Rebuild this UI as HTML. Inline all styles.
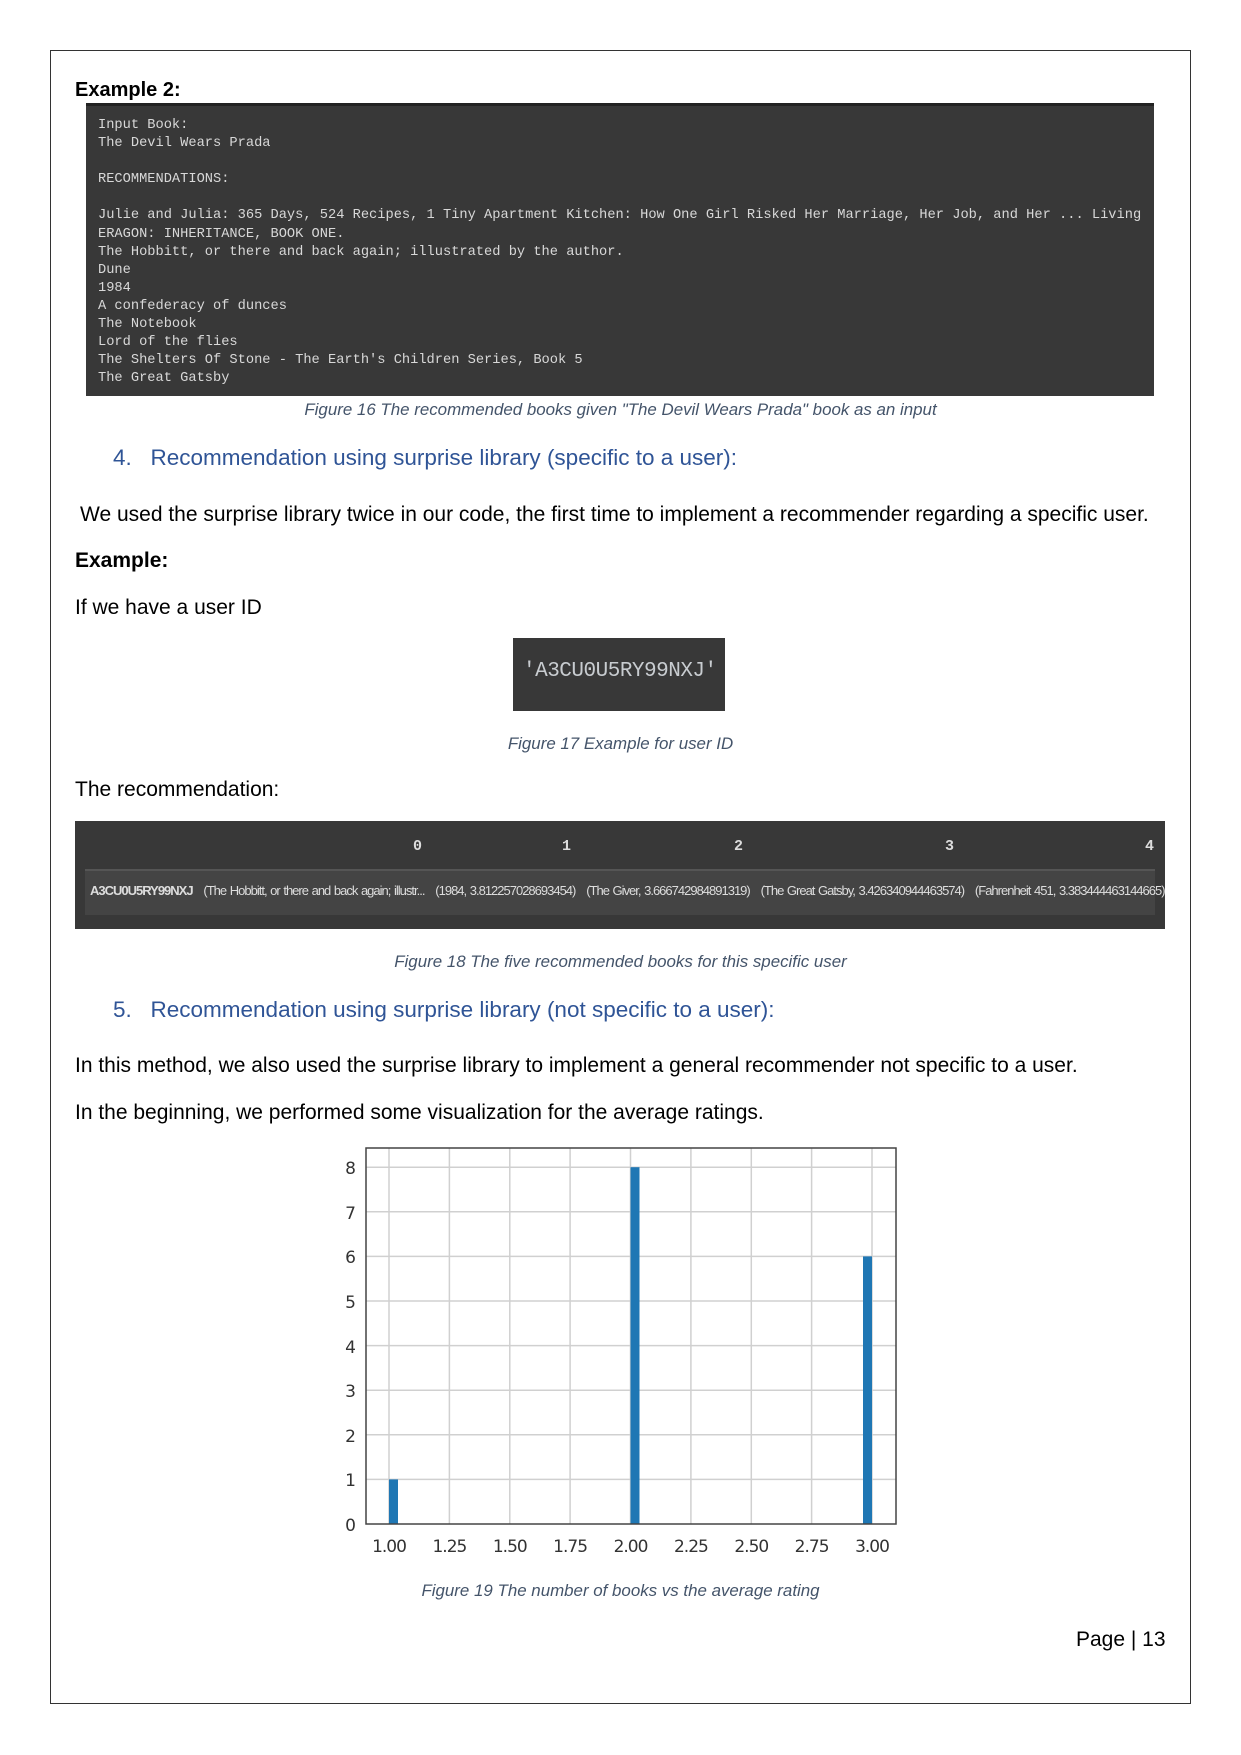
<!DOCTYPE html>
<html><head><meta charset="utf-8"><style>
body{margin:0;width:1241px;height:1755px;background:#fff;position:relative;font-family:"Liberation Sans",sans-serif;color:#000;overflow:hidden}
.a{position:absolute;white-space:nowrap}
.frame{position:absolute;left:50px;top:50px;width:1139px;height:1652px;border:1.5px solid #333}
.code{position:absolute;left:86px;top:103px;width:1068px;height:293px;background:#383838;border-top:3px solid #222;box-sizing:border-box}
.code pre{margin:0;position:absolute;left:12px;top:11px;font-family:"Liberation Mono",monospace;font-size:13.7px;line-height:18.1px;color:#d8d8d8}
.cap{font-style:italic;font-size:16.9px;color:#44546A;text-align:center;width:1241px;left:0}
.h{font-size:22.5px;color:#2F5496}
.p{font-size:21px}
</style></head><body>
<div class="frame"></div>
<div class="a" style="left:75px;top:79px;font-size:20px;font-weight:bold">Example 2:</div>
<div class="code"><pre>Input Book:
The Devil Wears Prada

RECOMMENDATIONS:

Julie and Julia: 365 Days, 524 Recipes, 1 Tiny Apartment Kitchen: How One Girl Risked Her Marriage, Her Job, and Her ... Living
ERAGON: INHERITANCE, BOOK ONE.
The Hobbitt, or there and back again; illustrated by the author.
Dune
1984
A confederacy of dunces
The Notebook
Lord of the flies
The Shelters Of Stone - The Earth's Children Series, Book 5
The Great Gatsby</pre></div>
<div class="a cap" style="top:400px">Figure 16 The recommended books given "The Devil Wears Prada" book as an input</div>
<div class="a h" style="left:113px;top:445px">4.&nbsp;&nbsp; Recommendation using surprise library (specific to a user):</div>
<div class="a p" style="left:80px;top:503px">We used the surprise library twice in our code, the first time to implement a recommender regarding a specific user.</div>
<div class="a p" style="left:75px;top:549px;font-weight:bold">Example:</div>
<div class="a p" style="left:75px;top:596px">If we have a user ID</div>
<div class="a" style="left:513px;top:638px;width:212px;height:73px;background:#383838"></div>
<div class="a" style="left:523px;top:660px;font-family:'Liberation Mono',monospace;font-size:21px;color:#c8ccd0;letter-spacing:-0.5px">'A3CU0U5RY99NXJ'</div>
<div class="a cap" style="top:734px">Figure 17 Example for user ID</div>
<div class="a p" style="left:75px;top:778px">The recommendation:</div>
<div class="a" style="left:75px;top:821px;width:1090px;height:108px;background:#383838"></div>
<div class="a" style="left:85px;top:869px;width:1070px;height:44px;background:#444;border-top:2px solid #555"></div>
<div class="a" style="top:838px;left:0;font-family:'Liberation Mono',monospace;font-size:15px;font-weight:bold;color:#ddd">
<span class="a" style="left:413px">0</span><span class="a" style="left:562px">1</span><span class="a" style="left:734px">2</span><span class="a" style="left:945px">3</span><span class="a" style="left:1145px">4</span></div>
<div class="a" style="left:90px;top:883px;font-size:13px;color:#ddd;letter-spacing:-1.0px;word-spacing:1px"><b>A3CU0U5RY99NXJ</b>&nbsp;&nbsp; (The Hobbitt, or there and back again; illustr...&nbsp;&nbsp; (1984, 3.812257028693454)&nbsp;&nbsp; (The Giver, 3.666742984891319)&nbsp;&nbsp; (The Great Gatsby, 3.426340944463574)&nbsp;&nbsp; (Fahrenheit 451, 3.383444463144665)</div>
<div class="a cap" style="top:952px">Figure 18 The five recommended books for this specific user</div>
<div class="a h" style="left:113px;top:997px">5.&nbsp;&nbsp; Recommendation using surprise library (not specific to a user):</div>
<div class="a p" style="left:75px;top:1054px">In this method, we also used the surprise library to implement a general recommender not specific to a user.</div>
<div class="a p" style="left:75px;top:1101px">In the beginning, we performed some visualization for the average ratings.</div>
<svg class="a" style="left:0;top:0" width="1241" height="1755">
<g stroke="#d0d0d0" stroke-width="1.5">
<line x1="389" y1="1148" x2="389" y2="1524"/><line x1="449.4" y1="1148" x2="449.4" y2="1524"/><line x1="509.8" y1="1148" x2="509.8" y2="1524"/><line x1="570.1" y1="1148" x2="570.1" y2="1524"/><line x1="630.5" y1="1148" x2="630.5" y2="1524"/><line x1="690.9" y1="1148" x2="690.9" y2="1524"/><line x1="751.3" y1="1148" x2="751.3" y2="1524"/><line x1="811.6" y1="1148" x2="811.6" y2="1524"/><line x1="872" y1="1148" x2="872" y2="1524"/>
<line x1="366" y1="1479.4" x2="896" y2="1479.4"/><line x1="366" y1="1434.8" x2="896" y2="1434.8"/><line x1="366" y1="1390.2" x2="896" y2="1390.2"/><line x1="366" y1="1345.6" x2="896" y2="1345.6"/><line x1="366" y1="1301" x2="896" y2="1301"/><line x1="366" y1="1256.4" x2="896" y2="1256.4"/><line x1="366" y1="1211.8" x2="896" y2="1211.8"/><line x1="366" y1="1167.2" x2="896" y2="1167.2"/>
</g>
<g fill="#1f77b4"><rect x="389" y="1479.4" width="9" height="44.6"/><rect x="630.5" y="1167.2" width="9" height="356.8"/><rect x="863" y="1256.4" width="9" height="267.6"/></g>
<rect x="366" y="1148" width="530" height="376" fill="none" stroke="#444" stroke-width="1.5"/>
<g font-family="DejaVu Sans,sans-serif" font-size="17" fill="#333" text-anchor="end">
<text x="356" y="1531">0</text><text x="356" y="1486">1</text><text x="356" y="1442">2</text><text x="356" y="1397">3</text><text x="356" y="1353">4</text><text x="356" y="1308">5</text><text x="356" y="1263">6</text><text x="356" y="1219">7</text><text x="356" y="1174">8</text></g>
<g font-family="DejaVu Sans,sans-serif" font-size="17" fill="#333" text-anchor="middle" letter-spacing="-1">
<text x="389" y="1552">1.00</text><text x="449.4" y="1552">1.25</text><text x="509.8" y="1552">1.50</text><text x="570.1" y="1552">1.75</text><text x="630.5" y="1552">2.00</text><text x="690.9" y="1552">2.25</text><text x="751.3" y="1552">2.50</text><text x="811.6" y="1552">2.75</text><text x="872" y="1552">3.00</text></g>
</svg>
<div class="a cap" style="top:1581px">Figure 19 The number of books vs the average rating</div>
<div class="a p" style="left:1076px;top:1628px">Page | 13</div>
</body></html>
